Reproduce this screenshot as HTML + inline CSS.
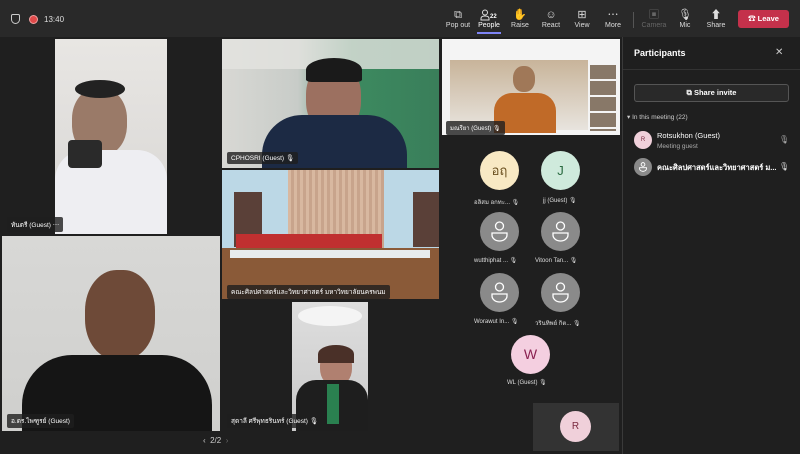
<!DOCTYPE html>
<html><head><meta charset="utf-8"><style>
*{margin:0;padding:0;box-sizing:border-box}
body{width:800px;height:454px;background:#1f1f1f;font-family:"Liberation Sans","Noto Sans CJK SC",sans-serif;color:#fff;position:relative;overflow:hidden}
.a{position:absolute}
.top{left:0;top:0;width:800px;height:37px;background:#292929}
.tb{top:9px;font-size:7px;color:#ddd;text-align:center;width:30px}
.tb i{display:block;height:13px;font-style:normal;font-size:11px;line-height:12px}
.lbl{background:rgba(30,30,30,.8);font-size:6.5px;padding:2px 4px;border-radius:2px;color:#fff;white-space:nowrap}
.av{border-radius:50%;width:39px;height:39px;text-align:center;line-height:39px;font-size:13px}
.gr{background:#8a8a8a}
.nm{font-size:6px;color:#ddd;white-space:nowrap}
</style></head><body>
<div class="a top"></div>
<div class="a" style="left:11px;top:14px;width:9px;height:10px;border:1.2px solid #ccc;border-radius:2px 2px 5px 5px"></div>
<div class="a" style="left:29px;top:15px;width:9px;height:9px;border-radius:50%;background:#e04a4a;border:1.5px solid #f0a0a0"></div>
<div class="a" style="left:44px;top:15px;font-size:8px;color:#ddd">13:40</div>
<div class="a tb" style="left:443px"><i>⧉</i>Pop out</div>
<div class="a tb" style="left:474px;color:#fff"><i><svg width="18" height="12" viewBox="0 0 18 12"><circle cx="5" cy="3.5" r="2.5" fill="none" stroke="#ddd"/><path d="M1 11v-1.5c0-1.5 1.5-2.5 4-2.5s4 1 4 2.5V11z" fill="none" stroke="#ddd"/><text x="10" y="9" font-size="6" fill="#fff" font-weight="bold" font-family="Liberation Sans">22</text></svg></i>People</div>
<div class="a" style="left:477px;top:32px;width:24px;height:2px;background:#7f85f5"></div>
<div class="a tb" style="left:505px"><i>✋</i>Raise</div>
<div class="a tb" style="left:536px"><i>☺</i>React</div>
<div class="a tb" style="left:567px"><i>⊞</i>View</div>
<div class="a tb" style="left:598px"><i>⋯</i>More</div>
<div class="a" style="left:633px;top:12px;width:1px;height:16px;background:#555"></div>
<div class="a tb" style="left:639px;color:#666"><i>▣</i>Camera</div>
<div class="a tb" style="left:670px"><i>🎙</i>Mic</div>
<div class="a tb" style="left:701px"><i>⬆</i>Share</div>
<div class="a" style="left:738px;top:10px;width:51px;height:18px;background:#c4314b;border-radius:3px;font-size:7.5px;font-weight:bold;line-height:18px;text-align:center">☎ Leave</div>

<div class="a" style="left:55px;top:39px;width:112px;height:195px;background:linear-gradient(#e8e6e3,#d8d6d4)"></div>
<div class="a" style="left:72px;top:88px;width:55px;height:68px;border-radius:45%;background:#9a7a68"></div>
<div class="a" style="left:75px;top:80px;width:50px;height:18px;border-radius:50%;background:#222"></div>
<div class="a" style="left:55px;top:150px;width:112px;height:84px;background:#eeeef2;border-radius:30px 30px 0 0"></div>
<div class="a" style="left:68px;top:140px;width:34px;height:28px;background:#2a2a2a;border-radius:4px"></div>
<div class="a lbl" style="left:7px;top:217px">ทันตรี (Guest) ⋯</div>

<div class="a" style="left:222px;top:39px;width:217px;height:129px;background:linear-gradient(90deg,#d8d8d4 0%,#c8ccc8 35%,#3c8a60 60%,#3a7e5a 100%)"></div>
<div class="a" style="left:222px;top:39px;width:217px;height:30px;background:#e4e4e0;opacity:.8"></div>
<div class="a" style="left:306px;top:62px;width:55px;height:72px;border-radius:45%;background:#9c7060"></div>
<div class="a" style="left:306px;top:58px;width:56px;height:24px;border-radius:50% 50% 10% 10%;background:#1a1a1a"></div>
<div class="a" style="left:262px;top:115px;width:145px;height:53px;border-radius:40px 40px 0 0;background:#1c2a44"></div>
<div class="a lbl" style="left:227px;top:152px">CPHOSRI (Guest) 🎙</div>

<div class="a" style="left:222px;top:170px;width:217px;height:129px;background:#bcd8e6"></div>
<div class="a" style="left:288px;top:170px;width:96px;height:80px;background:repeating-linear-gradient(90deg,#d8b8a0 0 3px,#c8a48c 3px 6px)"></div>
<div class="a" style="left:234px;top:192px;width:28px;height:55px;background:#5a4038"></div>
<div class="a" style="left:413px;top:192px;width:26px;height:55px;background:#5a4038"></div>
<div class="a" style="left:236px;top:234px;width:146px;height:18px;background:#c03030"></div>
<div class="a" style="left:222px;top:248px;width:217px;height:51px;background:#8a5a38"></div>
<div class="a" style="left:230px;top:250px;width:200px;height:8px;background:#e8ecee"></div>
<div class="a lbl" style="left:227px;top:285px">คณะศิลปศาสตร์และวิทยาศาสตร์ มหาวิทยาลัยนครพนม</div>

<div class="a" style="left:2px;top:236px;width:218px;height:195px;background:linear-gradient(#d8d8d6,#cfcfcd)"></div>
<div class="a" style="left:85px;top:270px;width:70px;height:90px;border-radius:45%;background:#6e4a38"></div>
<div class="a" style="left:22px;top:355px;width:190px;height:76px;border-radius:50px 50px 0 0;background:#151515"></div>
<div class="a lbl" style="left:7px;top:414px">อ.ดร.ไพฑูรย์ (Guest)</div>

<div class="a" style="left:292px;top:302px;width:76px;height:129px;background:linear-gradient(#dedede,#cacaca)"></div>
<div class="a" style="left:298px;top:306px;width:64px;height:20px;border-radius:50%;background:#f4f4f4"></div>
<div class="a" style="left:320px;top:348px;width:32px;height:38px;border-radius:45%;background:#b08070"></div>
<div class="a" style="left:318px;top:345px;width:36px;height:18px;border-radius:50% 50% 0 0;background:#4a3028"></div>
<div class="a" style="left:296px;top:380px;width:72px;height:51px;border-radius:20px 20px 0 0;background:#1e1e1e"></div>
<div class="a" style="left:327px;top:384px;width:12px;height:40px;background:#2a8050"></div>
<div class="a lbl" style="left:227px;top:414px">สุดาลี ศรีพุทธรินทร์ (Guest) 🎙</div>

<div class="a" style="left:203px;top:436px;font-size:8px;color:#ccc">‹ &nbsp;2/2 &nbsp;<span style="color:#666">›</span></div>

<div class="a" style="left:442px;top:39px;width:178px;height:96px;background:#f4f4f4"></div>
<div class="a" style="left:450px;top:60px;width:138px;height:70px;background:linear-gradient(#c8b49a,#e8e4de)"></div>
<div class="a" style="left:590px;top:65px;width:26px;height:66px;background:repeating-linear-gradient(#887868 0 14px,#f4f4f4 14px 16px)"></div>
<div class="a" style="left:513px;top:66px;width:22px;height:26px;border-radius:45%;background:#a07858"></div>
<div class="a" style="left:494px;top:93px;width:62px;height:40px;border-radius:18px 18px 0 0;background:#c06a28"></div>
<div class="a lbl" style="left:446px;top:121px;font-size:6px">มณรียา (Guest) 🎙</div>

<div class="a av" style="left:480px;top:151px;background:#f8e9c4;color:#6a5020">อฤ</div>
<div class="a av" style="left:541px;top:151px;background:#cfeadc;color:#2a6a40">J</div>
<div class="a nm" style="left:474px;top:197px">อลิสม อกทะ... 🎙</div>
<div class="a nm" style="left:543px;top:197px">jj (Guest) 🎙</div>
<svg class="a" style="left:480px;top:212px" width="100" height="101" viewBox="0 0 100 101">
<defs><g id="p"><circle cx="19.5" cy="19.5" r="19.5" fill="#8a8a8a"/><circle cx="19.5" cy="14" r="4" fill="none" stroke="#fff" stroke-width="1.3"/><path d="M12 21h15v2a7.5 6 0 0 1-15 0z" fill="none" stroke="#fff" stroke-width="1.3"/></g></defs>
<use href="#p"/><use href="#p" x="61"/><use href="#p" y="61"/><use href="#p" x="61" y="61"/></svg>
<div class="a nm" style="left:474px;top:257px">wutthiphat ... 🎙</div>
<div class="a nm" style="left:535px;top:257px">Vitoon Tan... 🎙</div>
<div class="a nm" style="left:474px;top:318px">Worawut In... 🎙</div>
<div class="a nm" style="left:535px;top:318px">วรินทิพย์ กิต... 🎙</div>
<div class="a av" style="left:511px;top:335px;background:#f4cfe0;color:#8a2050;font-size:14px">W</div>
<div class="a nm" style="left:507px;top:379px">WL (Guest) 🎙</div>
<div class="a" style="left:533px;top:403px;width:86px;height:48px;background:#333"></div>
<div class="a av" style="left:560px;top:411px;width:31px;height:31px;line-height:31px;font-size:10px;background:#f0d0da;color:#7a2a40">R</div>

<div class="a" style="left:622px;top:37px;width:1px;height:417px;background:#3a3a3a"></div>
<div class="a" style="left:623px;top:37px;width:177px;height:417px;background:#1f1f1f"></div>
<div class="a" style="left:634px;top:48px;font-size:9px;font-weight:bold">Participants</div>
<div class="a" style="left:775px;top:47px;font-size:10px;color:#ccc">✕</div>
<div class="a" style="left:623px;top:69px;width:177px;height:1px;background:#333"></div>
<div class="a" style="left:634px;top:84px;width:155px;height:18px;border:1px solid #555;border-radius:3px;background:#292929;text-align:center;font-size:7.5px;font-weight:bold;line-height:16px">⧉ Share invite</div>
<div class="a" style="left:627px;top:113px;font-size:6.5px;color:#ccc">▾ In this meeting (22)</div>
<div class="a av" style="left:634px;top:131px;width:18px;height:18px;line-height:18px;font-size:6px;background:#f0d0da;color:#7a2a40">R</div>
<div class="a" style="left:657px;top:131px;font-size:7.5px">Rotsukhon (Guest)</div>
<div class="a" style="left:657px;top:143px;font-size:6.5px;color:#aaa">Meeting guest</div>
<div class="a" style="left:779px;top:135px;font-size:8px;color:#aaa">🎙</div>
<svg class="a" style="left:634px;top:158px" width="18" height="18" viewBox="0 0 39 39"><circle cx="19.5" cy="19.5" r="19.5" fill="#8a8a8a"/><circle cx="19.5" cy="14" r="4" fill="none" stroke="#fff" stroke-width="2"/><path d="M12 21h15v2a7.5 6 0 0 1-15 0z" fill="none" stroke="#fff" stroke-width="2"/></svg>
<div class="a" style="left:657px;top:162px;font-size:7.5px;font-weight:bold">คณะศิลปศาสตร์และวิทยาศาสตร์ ม...</div>
<div class="a" style="left:779px;top:162px;font-size:8px;color:#ddd">🎙</div>
</body></html>
